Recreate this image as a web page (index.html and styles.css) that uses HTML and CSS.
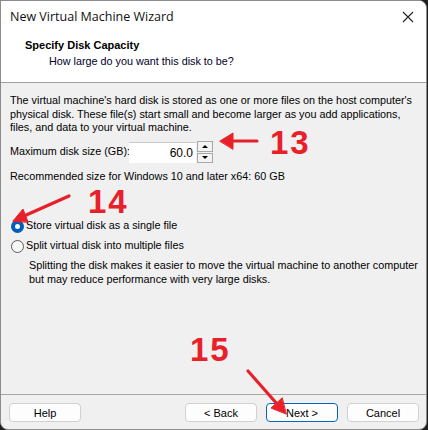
FILE: index.html
```html
<!DOCTYPE html>
<html lang="en">
<head>
  <meta charset="UTF-8" />
  <title>New Virtual Machine Wizard</title>
  <link rel="stylesheet" href="styles.css">
</head>
<body>
  <div class="window">
    <div class="titlebar">
      <span>New Virtual Machine Wizard</span>
      <svg class="close" width="12" height="12" viewBox="0 0 12 12">
        <path d="M1 1 L11 11 M11 1 L1 11" stroke="#222" stroke-width="1.1" fill="none"/>
      </svg>
    </div>

    <!-- Page header -->
    <div class="header">
      <div class="header-title">Specify Disk Capacity</div>
      <div class="header-sub">How large do you want this disk to be?</div>
    </div>

    <div class="content">
      <p class="intro">The virtual machine's hard disk is stored as one or more files on the host computer's physical disk. These file(s) start small and become larger as you add applications, files, and data to your virtual machine.</p>

      <div class="size-row">
        <label>Maximum disk size (GB):</label>
        <div class="spin-input">60.0</div>
        <div class="spin">
          <div class="spin-btn"><span class="tri-up"></span></div>
          <div class="spin-btn"><span class="tri-down"></span></div>
        </div>
      </div>

      <p class="recommend">Recommended size for Windows 10 and later x64: 60 GB</p>

      <div class="radios">
        <div class="radio-row"><span class="radio checked"></span>Store virtual disk as a single file</div>
        <div class="radio-row"><span class="radio"></span>Split virtual disk into multiple files</div>
        <p class="hint">Splitting the disk makes it easier to move the virtual machine to another computer but may reduce performance with very large disks.</p>
      </div>
    </div>

    <div class="footer">
      <button class="btn">Help</button>
      <div class="spacer"></div>
      <button class="btn">&lt; Back</button>
      <button class="btn primary">Next &gt;</button>
      <button class="btn">Cancel</button>
    </div>

    <!-- Red tutorial annotations -->
    <div class="note note-13">13</div>
    <div class="note note-14">14</div>
    <div class="note note-15">15</div>
    <svg class="arrows" width="428" height="430" viewBox="0 0 428 430">
      <g stroke="#e8202a" stroke-width="3.2" stroke-linecap="round" fill="#e8202a">
        <line x1="257" y1="141" x2="230" y2="141"/>
        <polygon points="220,141 233,133 233,149" stroke-width="1"/>
        <line x1="69" y1="196" x2="24" y2="216"/>
        <polygon points="13,221 23,209 28,222" stroke-width="1"/>
        <line x1="248" y1="371" x2="278" y2="405"/>
        <polygon points="286,414 271,408 282,398" stroke-width="1"/>
      </g>
    </svg>
  </div>
</body>
</html>
```

FILE: styles.css
```css
body { margin: 0; width: 428px; height: 430px; overflow: hidden; background: #1f1f1f; font-family: "Liberation Sans", Arial, sans-serif; font-size: 10.8px; color: #000; }
.window { position: relative; width: 427px; height: 430px; box-sizing: border-box; border: 1px solid #8c8c8c; border-radius: 0 8px 8px 8px; background: #f0f0f0; overflow: hidden; display: flex; flex-direction: column; }

.titlebar { height: 30px; background: #fff; display: flex; align-items: center; justify-content: space-between; padding: 0 12px 0 9px; font-family: "Open Sans", sans-serif; font-size: 12.5px; color: #111; }
.close { margin-top: 1px; }

.header { height: 52px; background: #fff; border-bottom: 1px solid #a0a0a0; padding: 6px 0 0 24px; box-sizing: border-box; }
.header-title { font-weight: bold; font-size: 11px; line-height: 16px; }
.header-sub { padding-left: 24px; line-height: 16px; color: #000028; }

.content { flex: 1; padding: 11px 10px 0 9px; line-height: 13.5px; }
.content p { margin: 0; }
.intro { width: 408px; }

.size-row { display: flex; align-items: center; margin-top: 6px; height: 23px; }
.size-row label { width: 119px; flex-shrink: 0; white-space: nowrap; }
.spin-input { width: 67px; height: 21px; background: #fff; border-top: 1px solid #c8c8c8; text-align: right; line-height: 21px; padding-right: 3px; box-sizing: border-box; font-size: 12px; }
.spin { margin-left: 1px; width: 16px; height: 22px; display: flex; flex-direction: column; gap: 1px; }
.spin-btn { flex: 1; border: 1px solid #a8a8a8; background: #f3f3f3; display: flex; align-items: center; justify-content: center; }
.tri-up { border-left: 3px solid transparent; border-right: 3px solid transparent; border-bottom: 3px solid #000; }
.tri-down { border-left: 3px solid transparent; border-right: 3px solid transparent; border-top: 3px solid #000; }

.recommend { margin-top: 6px !important; }

.radios { margin-top: 33px; }
.radio-row { display: flex; align-items: center; height: 20px; margin-left: 1px; }
.radio { width: 13px; height: 13px; border-radius: 50%; border: 1px solid #5a5a5a; box-sizing: border-box; margin-right: 2px; background: #f7f7f7; }
.radio.checked { border: 4px solid #005fb8; background: #fff; }
.hint { margin: 2px 0 0 19px !important; width: 400px; line-height: 14px; }

.footer { height: 35px; border-top: 1px solid #a8a8a8; display: flex; align-items: flex-start; padding: 8px 7px 0 8px; gap: 9px; box-sizing: border-box; }
.spacer { flex: 1; }
.btn { width: 72px; height: 19px; background: #fdfdfd; border: 1px solid #d0d0d0; border-radius: 4px; font-family: "Liberation Sans", Arial, sans-serif; font-size: 11px; color: #000; padding: 0; }
.btn.primary { border-color: #0067c0; }

.note { position: absolute; color: #e8202a; font-family: "Liberation Sans", Arial, sans-serif; font-weight: bold; font-size: 33px; line-height: 26px; letter-spacing: 2px; }
.note-13 { left: 269px; top: 129px; }
.note-14 { left: 87px; top: 188px; }
.note-15 { left: 189px; top: 336px; }
.arrows { position: absolute; left: -1px; top: -1px; pointer-events: none; }
```
